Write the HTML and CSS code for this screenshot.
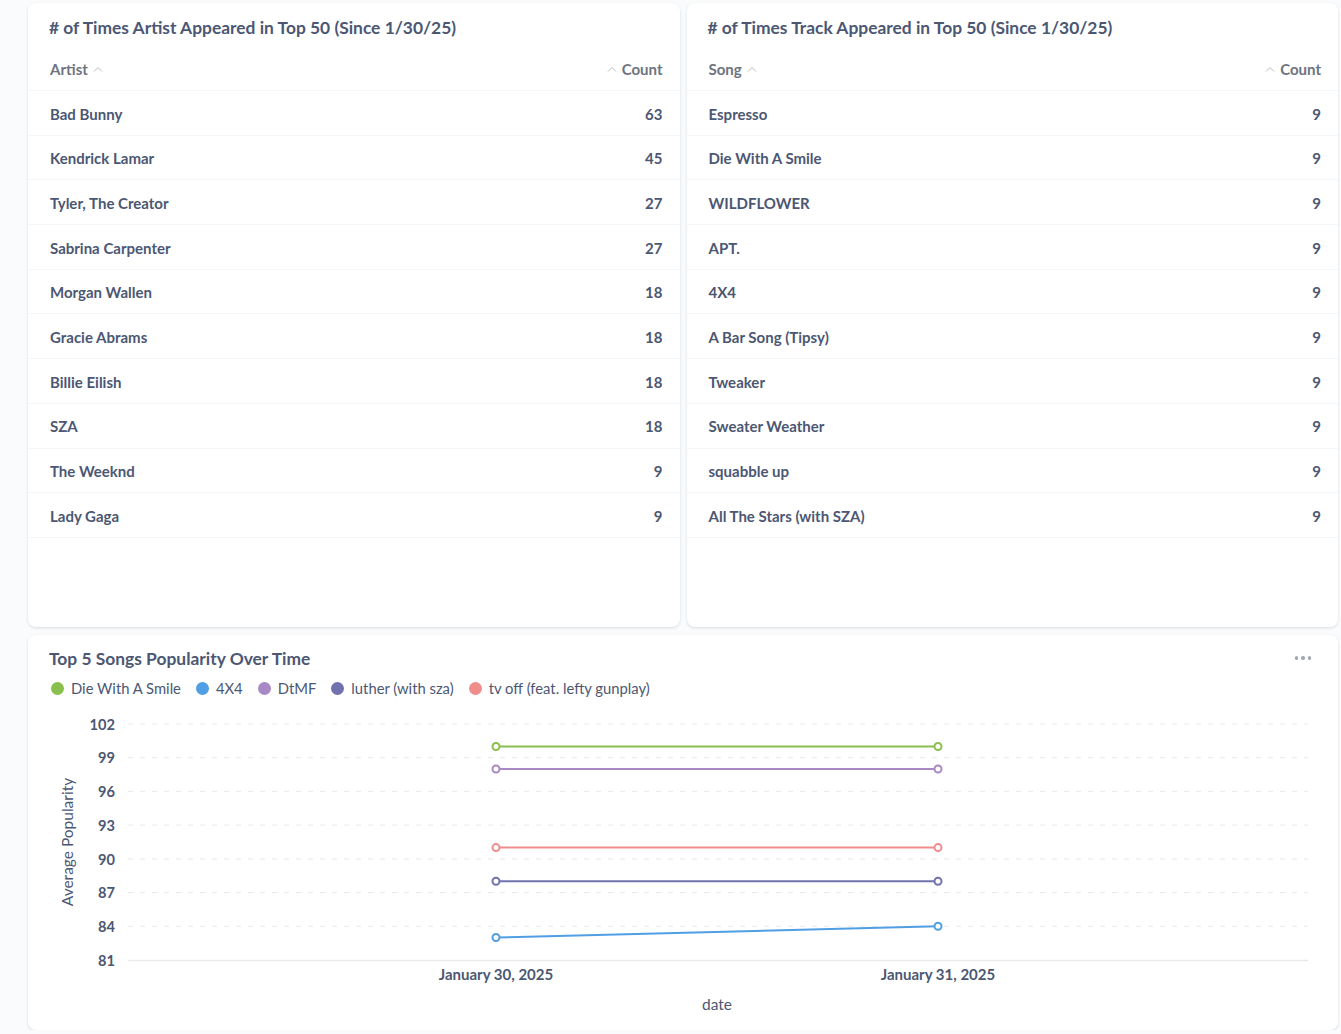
FILE: index.html
```html
<!DOCTYPE html>
<html lang="en">
<head>
<meta charset="utf-8">
<title>Dashboard</title>
<link rel="stylesheet" href="styles.css">
</head>
<body>
<div class="dashboard">
  <section class="card">
    <h2 class="card-title">
      # of Times Artist Appeared in Top 50 (Since 1/30/25)
    </h2>
    <div class="table">
      <div class="thead">
        <span class="th">Artist <svg class="caret" width="10" height="6" viewBox="0 0 10 6"><path d="M1 5.5 L5 1.5 L9 5.5" /></svg></span>
        <span class="th"><svg class="caret" width="10" height="6" viewBox="0 0 10 6"><path d="M1 5.5 L5 1.5 L9 5.5" /></svg> Count</span>
      </div>
      <div class="row"><span>Bad Bunny</span><span>63</span></div>
      <div class="row"><span>Kendrick Lamar</span><span>45</span></div>
      <div class="row"><span>Tyler, The Creator</span><span>27</span></div>
      <div class="row"><span>Sabrina Carpenter</span><span>27</span></div>
      <div class="row"><span>Morgan Wallen</span><span>18</span></div>
      <div class="row"><span>Gracie Abrams</span><span>18</span></div>
      <div class="row"><span>Billie Eilish</span><span>18</span></div>
      <div class="row"><span>SZA</span><span>18</span></div>
      <div class="row"><span>The Weeknd</span><span>9</span></div>
      <div class="row"><span>Lady Gaga</span><span>9</span></div>
    </div>
  </section>

  <section class="card">
    <h2 class="card-title">
      # of Times Track Appeared in Top 50 (Since 1/30/25)
    </h2>
    <div class="table">
      <div class="thead">
        <span class="th">Song <svg class="caret" width="10" height="6" viewBox="0 0 10 6"><path d="M1 5.5 L5 1.5 L9 5.5" /></svg></span>
        <span class="th"><svg class="caret" width="10" height="6" viewBox="0 0 10 6"><path d="M1 5.5 L5 1.5 L9 5.5" /></svg> Count</span>
      </div>
      <div class="row"><span>Espresso</span><span>9</span></div>
      <div class="row"><span>Die With A Smile</span><span>9</span></div>
      <div class="row"><span>WILDFLOWER</span><span>9</span></div>
      <div class="row"><span>APT.</span><span>9</span></div>
      <div class="row"><span>4X4</span><span>9</span></div>
      <div class="row"><span>A Bar Song (Tipsy)</span><span>9</span></div>
      <div class="row"><span>Tweaker</span><span>9</span></div>
      <div class="row"><span>Sweater Weather</span><span>9</span></div>
      <div class="row"><span>squabble up</span><span>9</span></div>
      <div class="row"><span>All The Stars (with SZA)</span><span>9</span></div>
    </div>
  </section>

  <section class="card card-wide">
    <div class="chart-head">
      <h2 class="card-title chart-title">Top 5 Songs Popularity Over Time</h2>
      <span class="more"><i></i><i></i><i></i></span>
    </div>
    <div class="legend">
      <span class="legend-item"><span class="dot dot-green"></span>Die With A Smile</span>
      <span class="legend-item"><span class="dot dot-blue"></span>4X4</span>
      <span class="legend-item"><span class="dot dot-purple"></span>DtMF</span>
      <span class="legend-item"><span class="dot dot-indigo"></span>luther (with sza)</span>
      <span class="legend-item"><span class="dot dot-red"></span>tv off (feat. lefty gunplay)</span>
    </div>
    <svg class="chart" width="1310" height="332" viewBox="0 0 1310 332">
      <g class="grid">
        <line x1="100" x2="1280" y1="26" y2="26" />
        <line x1="100" x2="1280" y1="59.7" y2="59.7" />
        <line x1="100" x2="1280" y1="93.4" y2="93.4" />
        <line x1="100" x2="1280" y1="127.1" y2="127.1" />
        <line x1="100" x2="1280" y1="160.9" y2="160.9" />
        <line x1="100" x2="1280" y1="194.6" y2="194.6" />
        <line x1="100" x2="1280" y1="228.3" y2="228.3" />
      </g>
      <line class="baseline" x1="100" x2="1280" y1="262.5" y2="262.5" />
      <g class="ytick">
        <text x="87" y="31.7">102</text>
        <text x="87" y="65.4">99</text>
        <text x="87" y="99.1">96</text>
        <text x="87" y="132.8">93</text>
        <text x="87" y="166.6">90</text>
        <text x="87" y="200.3">87</text>
        <text x="87" y="234">84</text>
        <text x="87" y="267.7">81</text>
      </g>
      <text class="axis-title" transform="translate(45 144) rotate(-90)">Average Popularity</text>
      <g class="xtick">
        <text x="468" y="282">January 30, 2025</text>
        <text x="910" y="282">January 31, 2025</text>
      </g>
      <text class="axis-title" x="689" y="311.5">date</text>

      <g class="series s-green">
        <line x1="468" x2="910" y1="48.5" y2="48.5" />
        <circle cx="468" cy="48.5" r="3.5" /><circle cx="910" cy="48.5" r="3.5" />
      </g>
      <g class="series s-purple">
        <line x1="468" x2="910" y1="71" y2="71" />
        <circle cx="468" cy="71" r="3.5" /><circle cx="910" cy="71" r="3.5" />
      </g>
      <g class="series s-red">
        <line x1="468" x2="910" y1="149.6" y2="149.6" />
        <circle cx="468" cy="149.6" r="3.5" /><circle cx="910" cy="149.6" r="3.5" />
      </g>
      <g class="series s-indigo">
        <line x1="468" x2="910" y1="183.3" y2="183.3" />
        <circle cx="468" cy="183.3" r="3.5" /><circle cx="910" cy="183.3" r="3.5" />
      </g>
      <g class="series s-blue">
        <line x1="468" x2="910" y1="239.5" y2="228.3" />
        <circle cx="468" cy="239.5" r="3.5" /><circle cx="910" cy="228.3" r="3.5" />
      </g>
    </svg>
  </section>
</div>
</body>
</html>
```

FILE: styles.css
```css
* { box-sizing: border-box; }

body {
  margin: 0;
  background: #f9fbfc;
  font-family: Lato, "Liberation Sans", sans-serif;
  color: #4c5773;
}

.dashboard {
  display: grid;
  grid-template-columns: 1fr 1fr;
  grid-template-rows: 624px 395px;
  gap: 8px 7px;
  padding: 3px 3px 0 28px;
}

.card {
  background: #fff;
  border-radius: 8px;
  box-shadow: 0 1px 3px rgba(0, 0, 0, 0.13);
  overflow: hidden;
}

.card-wide {
  grid-column: 1 / 3;
}

.card-title {
  margin: 0;
  font-size: 17.4px;
  font-weight: 700;
  line-height: 24px;
  padding: 13px 21px 0;
  color: #4c5773;
}

.table {
  margin-top: 7px;
}

.thead,
.row {
  display: flex;
  align-items: center;
  justify-content: space-between;
  padding: 0 17px 0 22px;
  border-bottom: 1px solid #f5f6f7;
}

.thead {
  height: 44px;
  font-size: 15px;
  font-weight: 700;
  color: #6e7381;
}

.th {
  display: inline-flex;
  align-items: center;
  gap: 5px;
}

.caret {
  display: block;
  fill: none;
  stroke: #b8bbc3;
  stroke-width: 1;
}

.row {
  height: 44.7px;
  padding-top: 1.5px;
  font-size: 15px;
  font-weight: 700;
  color: #4c5773;
}

.chart-head {
  display: flex;
  align-items: center;
  justify-content: space-between;
  padding-right: 27px;
}

.chart-title {
  padding-top: 12px;
}

.more {
  display: flex;
  gap: 3px;
  padding-top: 10px;
}

.more i {
  display: block;
  width: 3.5px;
  height: 3.5px;
  border-radius: 50%;
  background: #a1a7b3;
}

.legend {
  display: flex;
  align-items: center;
  gap: 15px;
  height: 20px;
  margin-top: 7px;
  padding-left: 23px;
  font-size: 14.8px;
  color: #4c5773;
}

.legend-item {
  display: inline-flex;
  align-items: center;
  gap: 7px;
}

.dot {
  display: block;
  width: 13px;
  height: 13px;
  border-radius: 50%;
}

.dot-green { background: #88bf4d; }
.dot-blue { background: #509ee3; }
.dot-purple { background: #a989c5; }
.dot-indigo { background: #7172ad; }
.dot-red { background: #ef8c8c; }

.chart {
  display: block;
  font-family: Lato, "Liberation Sans", sans-serif;
}

.grid line {
  stroke: #e8e9eb;
  stroke-width: 1;
  stroke-dasharray: 5 7;
}

.baseline {
  stroke: #e8e9eb;
  stroke-width: 1.5;
}

.ytick text {
  font-size: 14.6px;
  font-weight: 700;
  fill: #4c5773;
  text-anchor: end;
}

.xtick text {
  font-size: 15px;
  font-weight: 700;
  fill: #4c5773;
  text-anchor: middle;
}

.axis-title {
  font-size: 15.5px;
  fill: #4c5773;
  text-anchor: middle;
}

.series line {
  stroke-width: 2;
}

.series circle {
  fill: #fff;
  stroke-width: 2;
}

.s-green line, .s-green circle { stroke: #88bf4d; }
.s-blue line, .s-blue circle { stroke: #509ee3; }
.s-purple line, .s-purple circle { stroke: #a989c5; }
.s-indigo line, .s-indigo circle { stroke: #7172ad; }
.s-red line, .s-red circle { stroke: #ef8c8c; }
```
